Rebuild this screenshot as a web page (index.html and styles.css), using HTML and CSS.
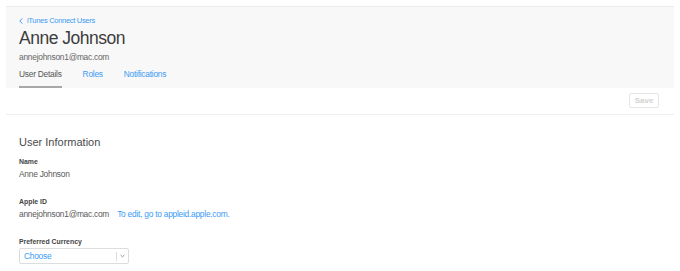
FILE: index.html
```html
<!DOCTYPE html>
<html lang="en">

<head>
    <meta charset="UTF-8">
    <meta name="viewport" content="width=device-width, initial-scale=1.0">
    <title>Anne Johnson</title>
    <link rel="stylesheet" href="styles.css">
</head>

<body>
    <div class="page">
        <header class="user_head">
            <a href="#" class="back">
                <svg width="4" height="6" viewBox="0 0 4 6"><path d="M3.3 0.4 L0.8 3 L3.3 5.6" fill="none" stroke="#3b9bf5" stroke-width="1"/></svg>
                iTunes Connect Users
            </a>
            <h1>Anne Johnson</h1>
            <p class="mail">annejohnson1@mac.com</p>
            <nav>
                <ul>
                    <li class="on">User Details</li>
                    <li>Roles</li>
                    <li>Notifications</li>
                </ul>
            </nav>
        </header><!-- .user_head end -->

        <div class="toolbar">
            <button type="button" class="save" disabled>Save</button>
        </div><!-- .toolbar end -->

        <section class="info">
            <h2>User Information</h2>

            <div class="field">
                <h4>Name</h4>
                <p>Anne Johnson</p>
            </div>

            <div class="field">
                <h4>Apple ID</h4>
                <p>annejohnson1@mac.com <a href="#">To edit, go to appleid.apple.com.</a></p>
            </div>

            <div class="field">
                <h4>Preferred Currency</h4>
                <div class="select">
                    <span>Choose</span>
                    <i class="arrow">
                        <svg width="5" height="4" viewBox="0 0 5 4"><path d="M0.6 1 L2.5 2.8 L4.4 1" fill="none" stroke="#888" stroke-width="0.9"/></svg>
                    </i>
                </div>
            </div>
        </section><!-- .info end -->
    </div>
</body>

</html>
```

FILE: styles.css
```css
@charset "utf-8";

* {
    margin: 0;
    padding: 0;
    box-sizing: border-box;
}

li {
    list-style: none;
}

a {
    text-decoration: none;
    color: inherit;
}

body {
    line-height: 1;
    color: #333;
    background-color: #fff;
    font-family: "Liberation Sans", Arial, sans-serif;
}

.page {
    padding: 6px 6px 0;
}

/* 상단 회색 영역 */
.user_head {
    background-color: #f8f8f8;
    border-top: 1px solid #ebebeb;
    padding: 9px 13px 0;
}

.user_head .back {
    display: flex;
    align-items: center;
    gap: 4px;
    font-size: 7.6px;
    letter-spacing: -0.35px;
    color: #3b9bf5;
    height: 10px;
}

.user_head h1 {
    font-size: 17.5px;
    font-weight: normal;
    letter-spacing: -0.5px;
    color: #3d3d3d;
    margin-top: 4px;
    height: 20px;
}

.user_head .mail {
    font-size: 8.4px;
    letter-spacing: -0.25px;
    color: #666;
    margin-top: 3px;
}

.user_head nav ul {
    display: flex;
    gap: 21px;
    margin-top: 8px;
}

.user_head nav ul li {
    font-size: 8.4px;
    letter-spacing: -0.25px;
    line-height: 10px;
    color: #3b9bf5;
    padding-bottom: 7px;
    border-bottom: 2px solid transparent;
}

.user_head nav ul li.on {
    color: #555;
    border-bottom-color: #a8a8a8;
}

.toolbar {
    display: flex;
    justify-content: flex-end;
    padding: 5px 15px 6px 0;
    border-bottom: 1px solid #eee;
}

.save {
    width: 30px;
    height: 15px;
    font-family: inherit;
    font-size: 8px;
    font-weight: bold;
    color: #d2d2d2;
    background-color: #fff;
    border: 1px solid #e6e6e6;
    border-radius: 2px;
}

.info {
    padding: 22px 13px 0;
}

.info h2 {
    font-size: 11px;
    font-weight: normal;
    color: #4a4a4a;
    margin-bottom: 11px;
}

.field {
    margin-bottom: 20px;
}

.field h4 {
    font-size: 6.9px;
    font-weight: bold;
    color: #444;
    margin-bottom: 3px;
}

.field p {
    font-size: 8.4px;
    letter-spacing: -0.25px;
    line-height: 10px;
    color: #5a5a5a;
}

.field p a {
    color: #3b9bf5;
    margin-left: 6px;
}

.select {
    display: flex;
    align-items: center;
    width: 110px;
    height: 16px;
    margin-top: -1px;
    border: 1px solid #ddd;
    border-radius: 2px;
    background-color: #fff;
}

.select span {
    flex: 1;
    font-size: 8.4px;
    letter-spacing: -0.25px;
    color: #3b9bf5;
    padding-left: 4px;
}

.select .arrow {
    display: flex;
    align-items: center;
    justify-content: center;
    width: 12px;
    height: 9px;
    border-left: 1px solid #ddd;
}
```
